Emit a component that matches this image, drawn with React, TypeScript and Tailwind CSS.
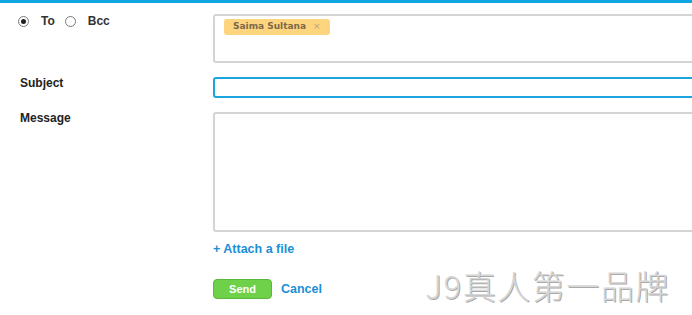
import React from 'react';

const Radio: React.FC<{ checked?: boolean }> = ({ checked }) => (
  <span className="inline-flex h-[11px] w-[11px] items-center justify-center rounded-full border border-[#7a7a7a] bg-white">
    {checked && <span className="h-[5px] w-[5px] rounded-full bg-[#222]" />}
  </span>
);

const App: React.FC = () => {
  return (
    <div
      className="relative h-[315px] w-[692px] overflow-hidden border-t-[3px] border-[#0ea5e0] bg-white"
      style={{ fontFamily: '"Liberation Sans", Arial, sans-serif' }}
    >
      <div className="flex flex-col gap-[14px] pt-[11px]">
        {/* Recipients */}
        <div className="flex">
          <div className="flex w-[213px] shrink-0 items-center gap-[10px] self-start pl-[18px] text-[12px] leading-[14px] font-bold text-[#333]">
            <div className="flex items-center gap-[12px]">
              <Radio checked />
              <span>To</span>
            </div>
            <div className="flex items-center gap-[12px]">
              <Radio />
              <span>Bcc</span>
            </div>
          </div>
          <div className="flex h-[49px] w-[500px] shrink-0 items-start rounded-[3px] border-2 border-[#d4d4d4] px-[9px] pt-[3px]">
            <span
              className="inline-flex h-[16px] items-center gap-[7px] rounded-[3px] bg-[#fdd57e] px-[9px] text-[9px] font-bold text-[#7a6a4a]"
              style={{ fontFamily: '"DejaVu Sans", Verdana, sans-serif' }}
            >
              Saima Sultana
              <span className="text-[9px] font-normal text-[#b9a47a]">×</span>
            </span>
          </div>
        </div>

        {/* Subject */}
        <div className="flex">
          <div className="w-[213px] shrink-0 pl-[20px] text-[12px] leading-[12px] font-bold text-[#222]">Subject</div>
          <div className="h-[21px] w-[500px] shrink-0 rounded-[3px] border-2 border-[#1ba5dc]" />
        </div>

        {/* Message */}
        <div className="flex">
          <div className="w-[213px] shrink-0 pl-[20px] text-[12px] leading-[12px] font-bold text-[#222]">Message</div>
          <div className="h-[120px] w-[500px] shrink-0 rounded-[3px] border-2 border-[#d4d4d4]" />
        </div>
      </div>

      <div className="pl-[213px] pt-[10px] leading-[12px]">
        <span className="text-[12.5px] font-bold text-[#1a8fd8]">+ Attach a file</span>
      </div>

      <div className="flex items-center gap-[9px] pl-[213px] pt-[24px]">
        <button className="h-[20px] w-[59px] rounded-[4px] border border-[#5cb83a] bg-[#6fd14a] text-[11px] font-bold text-white">
          Send
        </button>
        <span className="text-[12.5px] font-bold text-[#1a8fd8]">Cancel</span>
      </div>

      {/* Watermark overlay */}
      <div
        className="absolute left-[425px] top-[266px] text-[33px] font-light leading-none tracking-[1.5px] text-[#d6d6d6]"
        style={{
          fontFamily: '"Noto Sans CJK SC", sans-serif',
          textShadow: '1px 1px 0 #aaaaaa, -1px -1px 0 #ffffff',
        }}
      >
        J9真人第一品牌
      </div>
    </div>
  );
};

export default App;
